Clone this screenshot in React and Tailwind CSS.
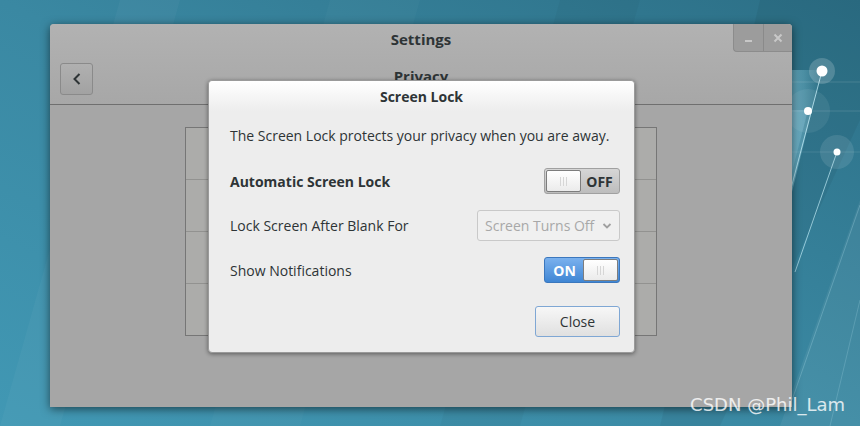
import React from 'react';

const font = { fontFamily: '"Open Sans", "Noto Sans", sans-serif' };

function Wallpaper() {
    return (
        <svg className="absolute inset-0" width="860" height="426" viewBox="0 0 860 426">
            <defs>
                <linearGradient id="bg" x1="0" y1="1" x2="1" y2="0">
                    <stop offset="0" stopColor="#4198b4" />
                    <stop offset="0.5" stopColor="#3a88a2" />
                    <stop offset="1" stopColor="#2c6f86" />
                </linearGradient>
                <linearGradient id="band" x1="0" y1="0" x2="1" y2="0">
                    <stop offset="0" stopColor="#8fd3e6" stopOpacity="0.55" />
                    <stop offset="1" stopColor="#8fd3e6" stopOpacity="0" />
                </linearGradient>
            </defs>
            <rect width="860" height="426" fill="url(#bg)" />
            {/* faint diagonal streaks */}
            <polygon points="120,0 180,0 60,426 0,426" fill="#ffffff" opacity="0.03" />
            <polygon points="330,0 420,0 300,426 210,426" fill="#ffffff" opacity="0.025" />
            <polygon points="560,0 640,0 520,426 440,426" fill="#000000" opacity="0.03" />
            <polygon points="760,0 860,0 860,120 720,426 660,426" fill="#000000" opacity="0.05" />
            <polygon points="860,200 860,426 780,426" fill="#ffffff" opacity="0.06" />
            {/* light band behind dots */}
            <polygon points="790,70 822,70 790,200" fill="url(#band)" />
            <polygon points="790,110 808,110 790,180" fill="#9ad8ea" opacity="0.25" />
            <line x1="822" y1="71" x2="780" y2="230" stroke="#bfeaf5" strokeWidth="1" opacity="0.8" />
            <line x1="837" y1="152" x2="795" y2="272" stroke="#bfeaf5" strokeWidth="1" opacity="0.7" />
            <line x1="860" y1="205" x2="792" y2="400" stroke="#bfeaf5" strokeWidth="1" opacity="0.25" />
            <line x1="860" y1="300" x2="830" y2="426" stroke="#bfeaf5" strokeWidth="1" opacity="0.2" />
            <line x1="792" y1="82" x2="860" y2="82" stroke="#ffffff" strokeWidth="1" opacity="0.12" />
            <line x1="792" y1="111" x2="860" y2="111" stroke="#ffffff" strokeWidth="1" opacity="0.12" />
            <line x1="792" y1="152" x2="860" y2="152" stroke="#ffffff" strokeWidth="1" opacity="0.1" />
            <circle cx="822" cy="71" r="13" fill="#ffffff" opacity="0.18" />
            <circle cx="808" cy="111" r="22" fill="#ffffff" opacity="0.07" />
            <circle cx="837" cy="152" r="17" fill="#ffffff" opacity="0.1" />
            <circle cx="822" cy="71" r="5.5" fill="#ffffff" />
            <circle cx="808" cy="111" r="4" fill="#ffffff" />
            <circle cx="837" cy="152" r="3.5" fill="#ffffff" />
        </svg>
    );
}

function Grip() {
    return (
        <div className="flex gap-[2px]">
            <div className="w-px h-[9px] bg-[#d6d6d6]" />
            <div className="w-px h-[9px] bg-[#d6d6d6]" />
            <div className="w-px h-[9px] bg-[#d6d6d6]" />
        </div>
    );
}

function Knob() {
    return (
        <div className="w-[35px] h-[22px] rounded-[2px] border border-[#7d7d7d] bg-gradient-to-b from-white to-[#ebebeb] flex items-center justify-center">
            <Grip />
        </div>
    );
}

function Switch({ on }) {
    if (on) {
        return (
            <div className="w-[76px] h-[26px] rounded-[3px] border border-[#3b77bd] bg-gradient-to-b from-[#7ab1ee] to-[#3f86d4] flex items-center p-[1px]">
                <span className="flex-1 text-center text-white text-[14px] font-bold">ON</span>
                <Knob />
            </div>
        );
    }
    return (
        <div className="w-[76px] h-[26px] rounded-[3px] border border-[#a0a0a0] bg-gradient-to-b from-[#d6d6d6] to-[#bdbdbd] flex items-center p-[1px]">
            <Knob />
            <span className="flex-1 text-center text-[#2e3436] text-[14px] font-bold">OFF</span>
        </div>
    );
}

export default function App() {
    return (
        <div className="relative w-[860px] h-[426px] overflow-hidden" style={font}>
            <Wallpaper />

            {/* Settings window */}
            <div className="absolute left-[50px] top-[24px] w-[742px] h-[383px] rounded-t-[4px] bg-[#a6a6a6] shadow-[0_2px_10px_rgba(0,0,0,0.55)] flex flex-col">
                <div className="relative h-[81px] rounded-t-[4px] bg-gradient-to-b from-[#b2b2b2] to-[#a7a7a7] border-b border-[#6f6f6f]">
                    <div className="h-[30px] flex items-center justify-center text-[15px] font-bold text-[#2e3436]">Settings</div>
                    <div className="flex items-center">
                        <div className="ml-[10px] mt-[9px] w-[33px] h-[32px] rounded-[3px] border border-[#8a8a8a] bg-gradient-to-b from-[#b0b0b0] to-[#a2a2a2] flex items-center justify-center">
                            <svg width="12" height="14" viewBox="0 0 12 14">
                                <path d="M8.5 2 L3.5 7 L8.5 12" fill="none" stroke="#2e3436" strokeWidth="2" />
                            </svg>
                        </div>
                        <div className="flex-1 text-center mt-[4px] mr-[43px] text-[15px] font-bold text-[#2e3436]">Privacy</div>
                    </div>
                    <div className="absolute right-0 top-0 w-[59px] h-[28px] rounded-bl-[4px] rounded-tr-[4px] bg-[#9c9c9c] border-l border-b border-[#8c8c8c] flex">
                        <div className="flex-1 flex items-center justify-center border-r border-[#8a8a8a]">
                            <div className="w-[7px] h-[2px] bg-[#c8c8c8] mt-[7px]" />
                        </div>
                        <div className="flex-1 flex items-center justify-center">
                            <svg width="10" height="10" viewBox="0 0 10 10">
                                <path d="M1.5 1.5 L8.5 8.5 M8.5 1.5 L1.5 8.5" stroke="#c8c8c8" strokeWidth="2" />
                            </svg>
                        </div>
                    </div>
                </div>
                <div className="pl-[135px] pt-[22px]">
                    <div className="w-[472px] border border-[#767676] bg-[#acacaa] flex flex-col">
                        <div className="h-[52px] border-b border-[#929290]" />
                        <div className="h-[52px] border-b border-[#929290]" />
                        <div className="h-[52px] border-b border-[#929290]" />
                        <div className="h-[51px]" />
                    </div>
                </div>
            </div>

            {/* Screen Lock dialog */}
            <div className="absolute left-[208px] top-[80px] w-[427px] h-[273px] rounded-[4px] bg-[#ededed] border border-[#9a9a9a] shadow-[0_1px_4px_rgba(0,0,0,0.45)] flex flex-col text-[#2e3436]">
                <div className="h-[30px] rounded-t-[4px] bg-gradient-to-b from-white to-[#ededed] flex items-center justify-center text-[14px] font-bold">
                    Screen Lock
                </div>
                <div className="pl-[21px] pr-[14px] flex flex-col">
                    <div className="mt-[15px] h-[18px] flex items-center text-[14px]">
                        The Screen Lock protects your privacy when you are away.
                    </div>
                    <div className="mt-[15px] h-[44px] flex items-center justify-between">
                        <span className="text-[14px] font-bold">Automatic Screen Lock</span>
                        <Switch on={false} />
                    </div>
                    <div className="h-[45px] flex items-center justify-between">
                        <span className="text-[14px]">Lock Screen After Blank For</span>
                        <div className="w-[143px] h-[31px] rounded-[3px] border border-[#c9c9c9] bg-[#f0f0f0] flex items-center justify-between pl-[7px] pr-[7px] text-[14px] text-[#a8a8a8]">
                            <span>Screen Turns Off</span>
                            <svg width="10" height="8" viewBox="0 0 10 8">
                                <path d="M1.5 2 L5 5.5 L8.5 2" fill="none" stroke="#a0a0a0" strokeWidth="1.8" />
                            </svg>
                        </div>
                    </div>
                    <div className="h-[44px] flex items-center justify-between">
                        <span className="text-[14px]">Show Notifications</span>
                        <Switch on={true} />
                    </div>
                    <div className="mt-[14px] flex justify-end">
                        <div className="w-[85px] h-[31px] rounded-[3px] border border-[#7fa7d4] bg-gradient-to-b from-[#f7f7f7] to-[#e0e0e0] flex items-center justify-center text-[14px]">
                            Close
                        </div>
                    </div>
                </div>
            </div>

            {/* watermark */}
            <div className="absolute right-[15px] top-[391px] text-[18px] text-white/80" style={{ fontFamily: '"DejaVu Sans", sans-serif' }}>
                CSDN @Phil_Lam
            </div>
        </div>
    );
}
